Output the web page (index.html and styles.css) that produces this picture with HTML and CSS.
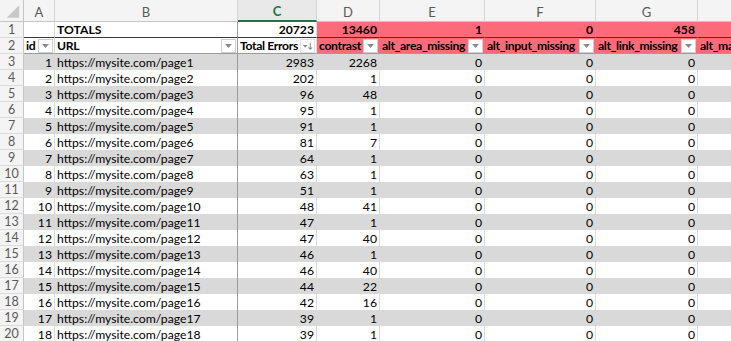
FILE: index.html
```html
<!DOCTYPE html>
<html>
<head>
<meta charset="utf-8">
<link rel="stylesheet" href="styles.css">
</head>
<body>
<div class="sheet">
  <div class="ch corner"><svg width="24" height="22" viewBox="0 0 24 22"><polygon points="20,5 20,18 7,18" fill="#c8c8c8"/></svg></div>
  <div class="ch">A</div>
  <div class="ch">B</div>
  <div class="ch sel">C</div>
  <div class="ch">D</div>
  <div class="ch">E</div>
  <div class="ch">F</div>
  <div class="ch">G</div>
  <div class="ch last">H</div>

  <div class="rh r1">1</div>
  <div class="c r1"></div>
  <div class="c r1 b">TOTALS</div>
  <div class="c r1 b n frz">20723</div>
  <div class="c r1 b n red">13460</div>
  <div class="c r1 b n red">1</div>
  <div class="c r1 b n red">0</div>
  <div class="c r1 b n red">458</div>
  <div class="c r1 red"></div>

  <div class="rh r2">2</div>
  <div class="c r2 b hd"><span>id</span><i class="fb"></i></div>
  <div class="c r2 b hd"><span>URL</span><i class="fb"></i></div>
  <div class="c r2 b hd frz"><span>Total Errors</span><i class="fb sort"><svg width="14" height="14" viewBox="0 0 14 14"><polygon points="2,6 7,6 4.5,9" fill="#8a8a8a"/><path d="M10 3.5V10.5M8 8.5L10 10.5L12 8.5" stroke="#8a8a8a" stroke-width="1.1" fill="none"/></svg></i></div>
  <div class="c r2 b hd red"><span>contrast</span><i class="fb"></i></div>
  <div class="c r2 b hd red"><span>alt_area_missing</span><i class="fb"></i></div>
  <div class="c r2 b hd red"><span>alt_input_missing</span><i class="fb"></i></div>
  <div class="c r2 b hd red"><span>alt_link_missing</span><i class="fb"></i></div>
  <div class="c r2 b hd red"><span>alt_map_missing</span><i class="fb"></i></div>

  <div class="rh">3</div><div class="c g n">1</div><div class="c g">https://mysite.com/page1</div><div class="c g n frz">2983</div><div class="c g n">2268</div><div class="c g n">0</div><div class="c g n">0</div><div class="c g n">0</div><div class="c g"></div>
  <div class="rh">4</div><div class="c n">2</div><div class="c">https://mysite.com/page2</div><div class="c n frz">202</div><div class="c n">1</div><div class="c n">0</div><div class="c n">0</div><div class="c n">0</div><div class="c"></div>
  <div class="rh">5</div><div class="c g n">3</div><div class="c g">https://mysite.com/page3</div><div class="c g n frz">96</div><div class="c g n">48</div><div class="c g n">0</div><div class="c g n">0</div><div class="c g n">0</div><div class="c g"></div>
  <div class="rh">6</div><div class="c n">4</div><div class="c">https://mysite.com/page4</div><div class="c n frz">95</div><div class="c n">1</div><div class="c n">0</div><div class="c n">0</div><div class="c n">0</div><div class="c"></div>
  <div class="rh">7</div><div class="c g n">5</div><div class="c g">https://mysite.com/page5</div><div class="c g n frz">91</div><div class="c g n">1</div><div class="c g n">0</div><div class="c g n">0</div><div class="c g n">0</div><div class="c g"></div>
  <div class="rh">8</div><div class="c n">6</div><div class="c">https://mysite.com/page6</div><div class="c n frz">81</div><div class="c n">7</div><div class="c n">0</div><div class="c n">0</div><div class="c n">0</div><div class="c"></div>
  <div class="rh">9</div><div class="c g n">7</div><div class="c g">https://mysite.com/page7</div><div class="c g n frz">64</div><div class="c g n">1</div><div class="c g n">0</div><div class="c g n">0</div><div class="c g n">0</div><div class="c g"></div>
  <div class="rh">10</div><div class="c n">8</div><div class="c">https://mysite.com/page8</div><div class="c n frz">63</div><div class="c n">1</div><div class="c n">0</div><div class="c n">0</div><div class="c n">0</div><div class="c"></div>
  <div class="rh">11</div><div class="c g n">9</div><div class="c g">https://mysite.com/page9</div><div class="c g n frz">51</div><div class="c g n">1</div><div class="c g n">0</div><div class="c g n">0</div><div class="c g n">0</div><div class="c g"></div>
  <div class="rh">12</div><div class="c n">10</div><div class="c">https://mysite.com/page10</div><div class="c n frz">48</div><div class="c n">41</div><div class="c n">0</div><div class="c n">0</div><div class="c n">0</div><div class="c"></div>
  <div class="rh">13</div><div class="c g n">11</div><div class="c g">https://mysite.com/page11</div><div class="c g n frz">47</div><div class="c g n">1</div><div class="c g n">0</div><div class="c g n">0</div><div class="c g n">0</div><div class="c g"></div>
  <div class="rh">14</div><div class="c n">12</div><div class="c">https://mysite.com/page12</div><div class="c n frz">47</div><div class="c n">40</div><div class="c n">0</div><div class="c n">0</div><div class="c n">0</div><div class="c"></div>
  <div class="rh">15</div><div class="c g n">13</div><div class="c g">https://mysite.com/page13</div><div class="c g n frz">46</div><div class="c g n">1</div><div class="c g n">0</div><div class="c g n">0</div><div class="c g n">0</div><div class="c g"></div>
  <div class="rh">16</div><div class="c n">14</div><div class="c">https://mysite.com/page14</div><div class="c n frz">46</div><div class="c n">40</div><div class="c n">0</div><div class="c n">0</div><div class="c n">0</div><div class="c"></div>
  <div class="rh">17</div><div class="c g n">15</div><div class="c g">https://mysite.com/page15</div><div class="c g n frz">44</div><div class="c g n">22</div><div class="c g n">0</div><div class="c g n">0</div><div class="c g n">0</div><div class="c g"></div>
  <div class="rh">18</div><div class="c n">16</div><div class="c">https://mysite.com/page16</div><div class="c n frz">42</div><div class="c n">16</div><div class="c n">0</div><div class="c n">0</div><div class="c n">0</div><div class="c"></div>
  <div class="rh">19</div><div class="c g n">17</div><div class="c g">https://mysite.com/page17</div><div class="c g n frz">39</div><div class="c g n">1</div><div class="c g n">0</div><div class="c g n">0</div><div class="c g n">0</div><div class="c g"></div>
  <div class="rh">20</div><div class="c n">18</div><div class="c">https://mysite.com/page18</div><div class="c n frz">39</div><div class="c n">1</div><div class="c n">0</div><div class="c n">0</div><div class="c n">0</div><div class="c"></div>
</div>
</body>
</html>
```
FILE: styles.css
```css
html, body {
  margin: 0;
  padding: 0;
  background: #ffffff;
  overflow: hidden;
}
.sheet {
  display: grid;
  grid-template-columns: 24px 31px 183px 79px 63px 105px 111px 102px 120px;
  grid-template-rows: 22px;
  grid-auto-rows: 16px;
  width: 731px;
  overflow: hidden;
  font-family: Lato, "Liberation Sans", sans-serif;
  font-size: 12.2px;
  color: #000;
}
.ch {
  box-sizing: border-box;
  background: #f4f4f4;
  border-right: 1px solid #d4d4d4;
  border-bottom: 1px solid #c6c6c6;
  color: #5a5a5a;
  font-size: 13px;
  display: flex;
  align-items: center;
  justify-content: center;
  padding-top: 2px;
}
.ch.corner {
  padding: 0;
  border-right-color: #c6c6c6;
}
.ch.sel {
  color: #217346;
  font-weight: bold;
  background: #e9e9e9;
  border-bottom: 2px solid #217346;
}
.ch.last { border-right: none; }
.rh {
  box-sizing: border-box;
  background: #f4f4f4;
  border-right: 1px solid #c6c6c6;
  border-bottom: 1px solid #dcdcdc;
  color: #5a5a5a;
  font-size: 12.5px;
  display: flex;
  align-items: center;
  justify-content: center;
}
.c {
  box-sizing: border-box;
  border-right: 1px solid #dadada;
  padding: 0 2px;
  white-space: nowrap;
  overflow: hidden;
  display: flex;
  align-items: center;
}
.c.n { justify-content: flex-end; }
.c.b { font-weight: bold; }
.c.g {
  background: #d9d9d9;
  border-right-color: transparent;
}
.c.r1 {
  border-bottom: 1px solid #3a3a3a;
}
.c.r2 {
  border-bottom: 1px solid #9c9c9c;
  letter-spacing: -0.35px;
}
.c.red {
  background: #fd6a7a;
  border-right-color: transparent;
}
/* freeze pane line between B and C */
.sheet > .c:nth-child(9n + 3) {
  border-right: 1px solid #9c9c9c;
}
.hd {
  justify-content: space-between;
  padding-right: 1px;
}
.hd span {
  flex: none;
}
.fb {
  flex: none;
  box-sizing: border-box;
  width: 15px;
  height: 14px;
  background: #ffffff url("data:image/svg+xml;utf8,<svg xmlns='http://www.w3.org/2000/svg' width='13' height='12'><polygon points='3,4 10,4 6.5,8' fill='%238a8a8a'/></svg>") no-repeat center;
  border: 1px solid #cfcfcf;
  margin-left: 2px;
}
.fb.sort {
  background: #ffffff;
  display: flex;
  align-items: center;
  justify-content: center;
  border: 1px solid #e0e0e0;
}
```
